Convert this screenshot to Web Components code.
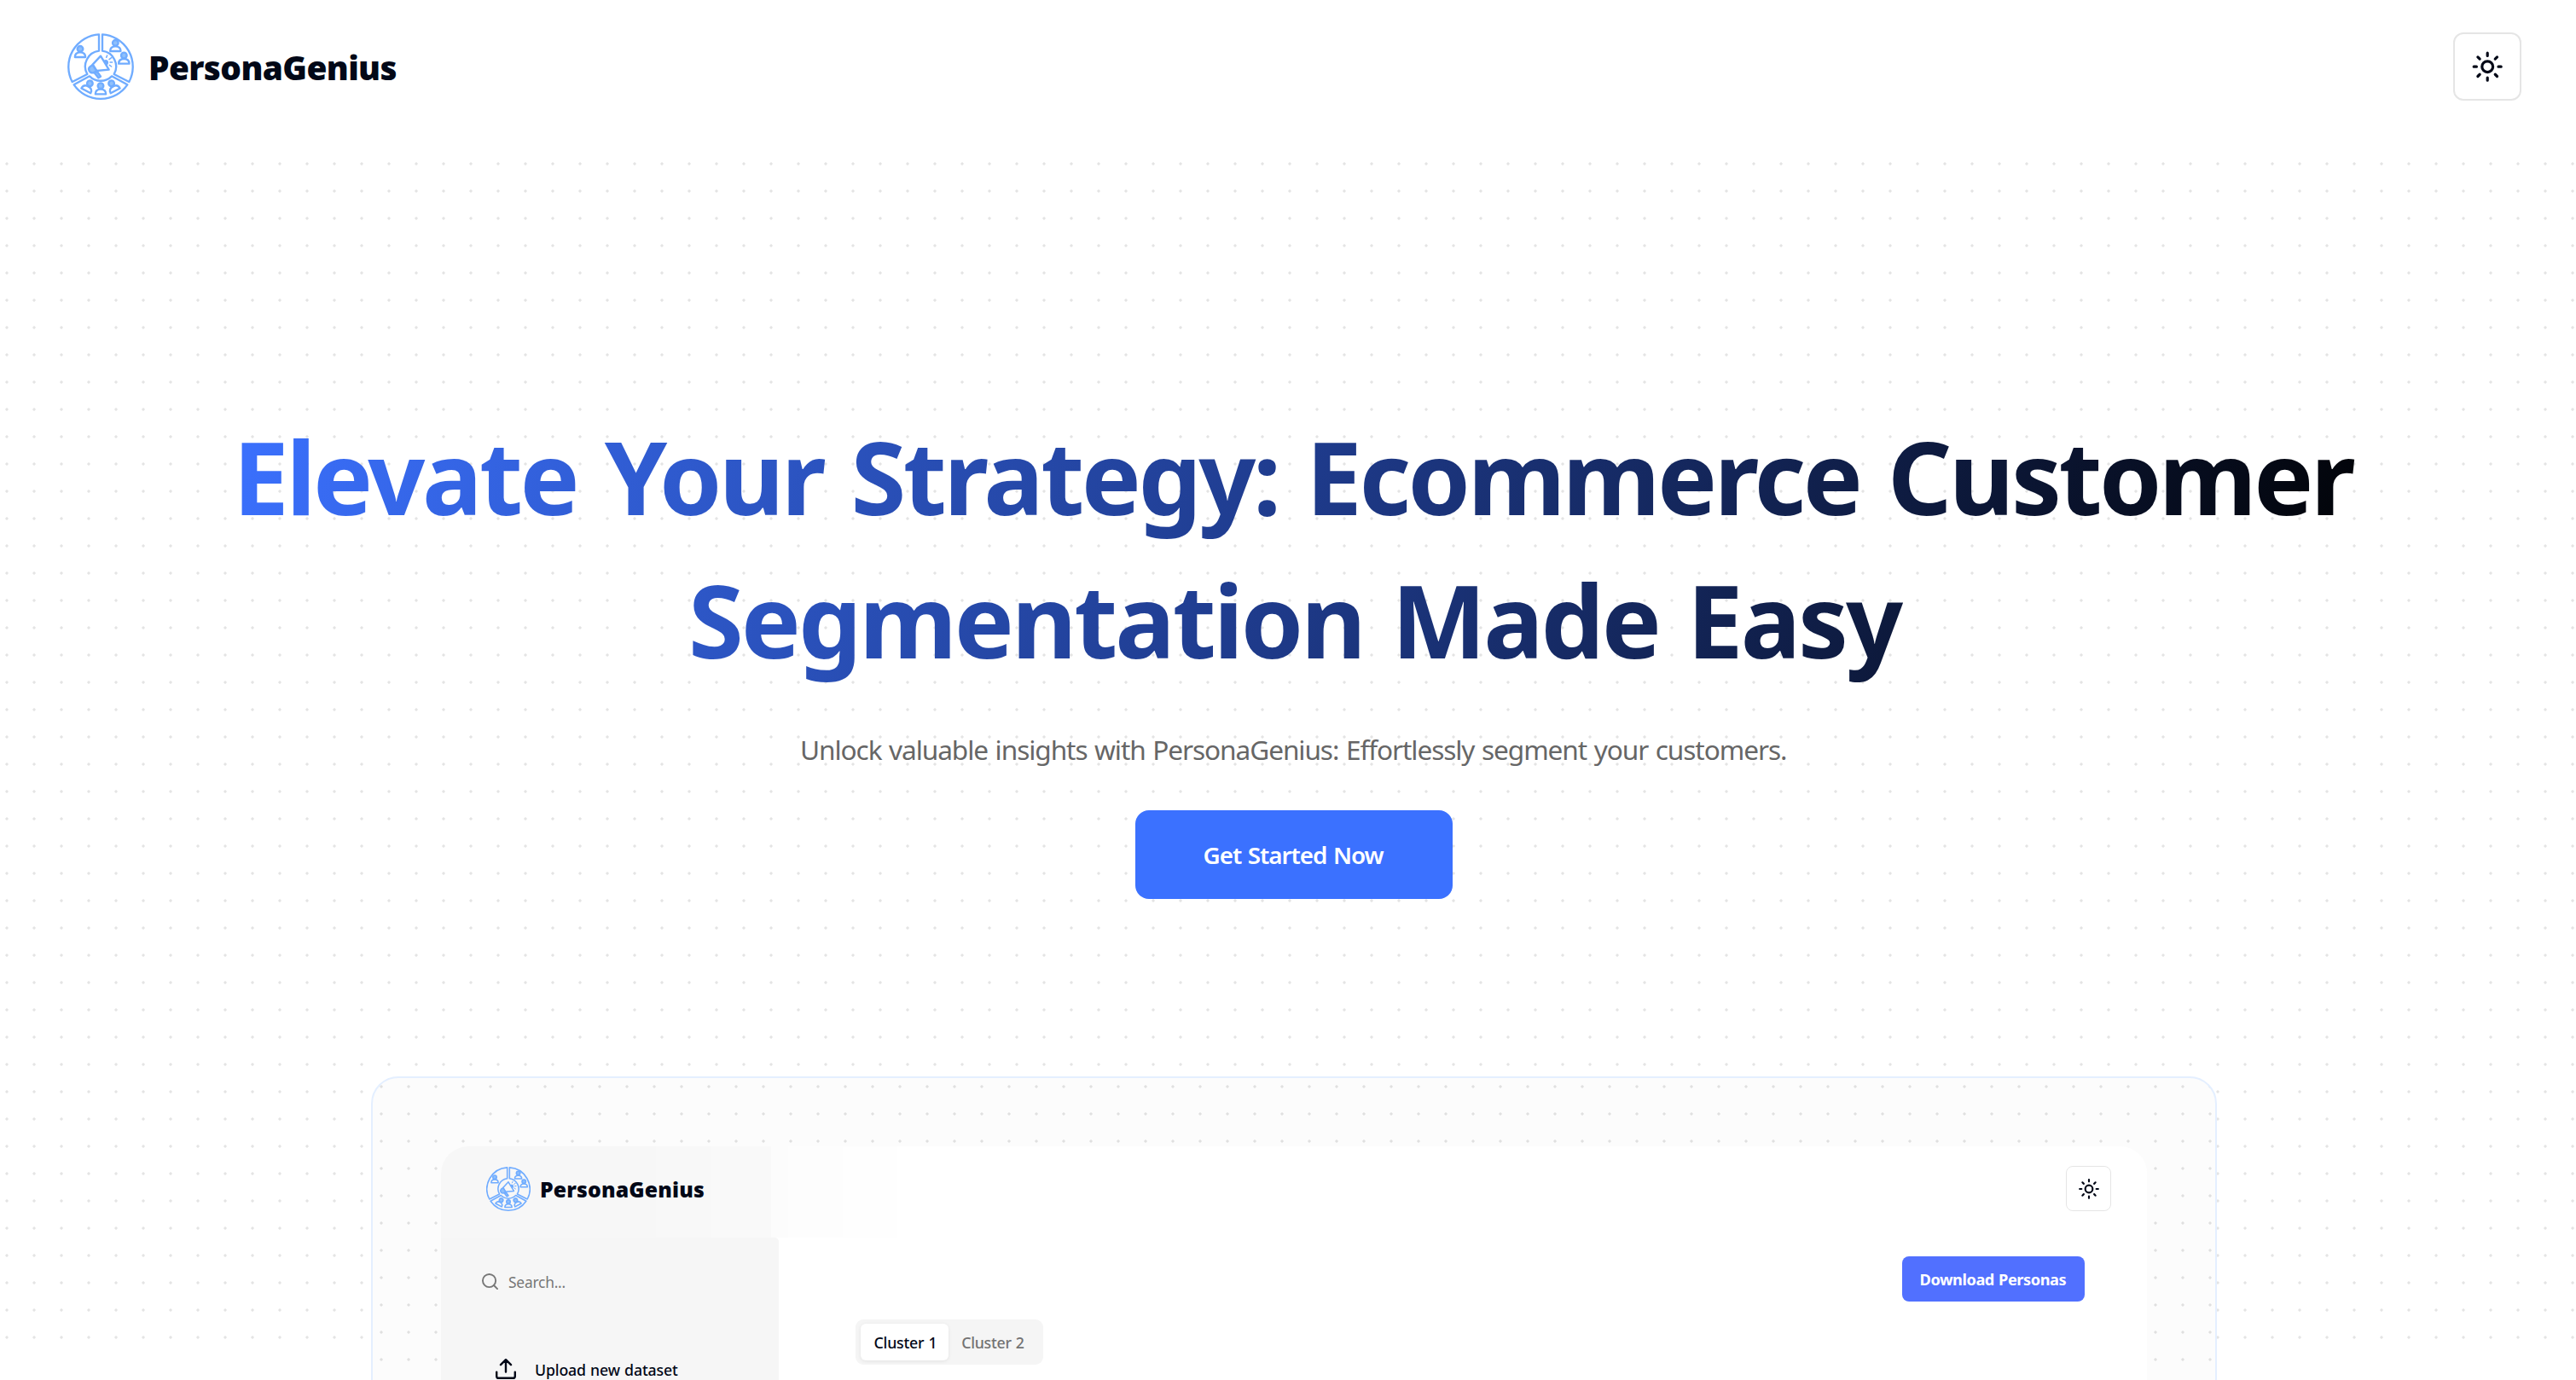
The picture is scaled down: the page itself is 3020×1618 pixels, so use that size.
<!DOCTYPE html>
<html lang="en">
<head>
<meta charset="utf-8">
<title>PersonaGenius</title>
<style>
html,body{margin:0;background:#fff}
body{width:3020px;height:1618px;overflow:hidden;font-family:"Noto Sans","Open Sans",sans-serif;color:#020817}
</style>
</head>
<body>
<landing-page></landing-page>
<script>
const define = (name, html, ready) => customElements.define(name, class extends HTMLElement {
  connectedCallback() {
    if (this.shadowRoot) return;
    const t = document.createElement('template');
    t.innerHTML = html;
    this.attachShadow({mode: 'open'}).append(t.content.cloneNode(true));
    if (ready) ready.call(this, this.shadowRoot);
  }
});

/* One line of text whose inked width is set in pixels by letter spacing. */
const ctx = document.createElement('canvas').getContext('2d');
define('fit-line', `<style>
  :host{display:block;white-space:nowrap;flex:none}
  span{display:inline-block}
</style><span><slot></slot></span>`, function (root) {
  const w = +this.getAttribute('width');
  const cs = getComputedStyle(this);
  const text = this.textContent;
  ctx.font = `${cs.fontWeight} ${cs.fontSize} ${cs.fontFamily}`;
  const m = ctx.measureText(text);
  const gap = parseFloat(cs.fontSize) * 0.045;
  const ink = m.actualBoundingBoxLeft + m.actualBoundingBoxRight + gap * (text.split(' ').length - 1);
  this.style.width = w + 'px';
  const s = root.querySelector('span');
  s.style.wordSpacing = gap + 'px';
  s.style.letterSpacing = (w - ink) / (text.length - 1) + 'px';
  s.style.marginLeft = m.actualBoundingBoxLeft + 'px';
});

define('segment-logo', `<style>
  :host{display:block;flex:none;width:var(--size,78px);height:var(--size,78px)}
  svg{display:block;width:100%;height:100%}
</style>
<svg viewBox="9 9 234 234" fill="none" stroke="#70acff" stroke-width="7" stroke-linejoin="round" stroke-linecap="round">
  <defs>
    <g id="p"><path d="M-18.500 16 C-18.500 4 -11 -1 0 -1 C11 -1 18.500 4 18.500 16 Z"/><circle cx="0" cy="-13" r="10" fill="#8fc0fb"/></g>
  </defs>
  <path d="M120 13 V71 A55 55 0 0 0 79 153 L26 180 A114 114 0 0 1 120 13Z"/>
  <path d="M132 13 V71 A55 55 0 0 1 173 153 L226 180 A114 114 0 0 0 132 13Z"/>
  <path d="M32 190 L87 160 A55 55 0 0 0 165 160 L220 190 A114 114 0 0 1 32 190Z"/>
  <use href="#p" x="54" y="77"/>
  <use href="#p" x="178" y="56"/>
  <use href="#p" x="208" y="100"/>
  <use href="#p" x="126" y="207"/>
  <use href="#p" transform="translate(82 197) rotate(28)"/>
  <use href="#p" transform="translate(170 197) rotate(-28)"/>
  <path d="M126 89 L155 137 L112 141 L98 119 Z"/>
  <path d="M98 120 L112 142 L100 148 C86 150 80 134 88 127Z" fill="#8fc0fb"/>
  <path d="M105 149 L114 144 L126 161 L118 166Z" fill="#8fc0fb"/>
  <path d="M141 106 C150 104 153 112 147 119Z" fill="#70acff"/>
  <path d="M146 94 L149 87 M156 101 L164 95 M159 111 L167 111 M157 121 L164 126" stroke-width="4.5"/>
</svg>`);

define('theme-button', `<style>
  :host{display:flex;flex:none;box-sizing:border-box;align-items:center;justify-content:center;width:var(--size,80px);height:var(--size,80px);
    border:var(--line,2px) solid #e5e5e5;border-radius:var(--radius,12px);background:#fff}
  svg{width:var(--icon,38.4px);height:var(--icon,38.4px)}
</style>
<svg viewBox="0 0 24 24" fill="none" stroke="#020817" stroke-width="2" stroke-linecap="round" stroke-linejoin="round">
  <circle cx="12" cy="12" r="4"/><path d="M12 2v2M12 20v2M4.93 4.93l1.41 1.41M17.66 17.66l1.41 1.41M2 12h2M20 12h2M6.34 17.66l-1.41 1.41M19.07 4.93l-1.41 1.41"/>
</svg>`);

define('site-header', `<style>
  :host{display:flex;justify-content:space-between;height:138px;margin-bottom:38px;padding:38px 64px 0 79px;box-sizing:border-box;align-items:flex-start}
  .brand{display:flex;align-items:center;gap:19px;height:80px}
  fit-line{font-size:38.8px;font-weight:900;line-height:78px;margin-top:1px}
</style>
<div class="brand"><segment-logo></segment-logo><fit-line width="288.5">PersonaGenius</fit-line></div>
<theme-button></theme-button>`);

define('cta-button', `<style>
  :host{display:flex;align-items:center;justify-content:center;width:372px;height:104px;border-radius:16px;background:#3b71ff;color:#fff}
  fit-line{font-size:27.8px;font-weight:600;line-height:104px}
</style><fit-line width="211">Get Started Now</fit-line>`);

define('hero-section', `<style>
  :host{display:flex;flex-direction:column;align-items:center;height:1408px;box-sizing:border-box;padding:298px 0 0 14px;
    background:radial-gradient(circle,#e4e4e4 1.2px,rgba(228,228,228,0) 2.1px) -8px 0/32px 32px}
  h1{margin:0;display:flex;flex-direction:column;align-items:center;flex:none;width:2484px;padding-left:10px;font-size:117.6px;font-weight:700;line-height:168px;
    color:transparent;background:linear-gradient(110deg,#3b71ff,#1e3a8a 50%,#000);-webkit-background-clip:text;background-clip:text}
  .sub{font-size:31.6px;line-height:56px;color:#666;margin:41px 0 43px}
  cta-button{flex:none}
  ::slotted(*){flex:none;margin-top:208px}
</style>
<h1><fit-line width="2478">Elevate Your Strategy: Ecommerce Customer</fit-line><fit-line width="1420">Segmentation Made Easy</fit-line></h1>
<fit-line class="sub" width="1154">Unlock valuable insights with PersonaGenius: Effortlessly segment your customers.</fit-line>
<cta-button></cta-button>
<slot></slot>`);

define('side-bar', `<style>
  :host{display:block;flex:none;width:396px;background:#f6f6f6;border-top-right-radius:5px}
  .search{display:flex;align-items:center;gap:12px;margin:36px 0 0 48px;height:30px;color:#777}
  .search svg{width:19px;height:19px}
  .search fit-line{font-size:17.4px;line-height:30px;margin-top:2px}
  .up{display:flex;align-items:center;gap:23px;margin:75px 0 0 64px;height:26px;font-weight:500}
  .up svg{width:24px;height:24px}
  .up fit-line{font-size:17.7px;line-height:24px;margin-top:1px}
</style>
<div class="search"><svg viewBox="2 2 20 20" fill="none" stroke="#777" stroke-width="2" stroke-linecap="round"><circle cx="11" cy="11" r="8"/><path d="m21 21-4.3-4.3"/></svg><fit-line width="66.5">Search...</fit-line></div>
<div class="up"><svg viewBox="2 2 20 20" fill="none" stroke="#020817" stroke-width="2" stroke-linecap="round" stroke-linejoin="round"><path d="M21 15v4a2 2 0 0 1-2 2H5a2 2 0 0 1-2-2v-4M17 8l-5-5-5 5M12 3v12"/></svg><fit-line width="167">Upload new dataset</fit-line></div>`);

define('cluster-tabs', `<style>
  :host{display:flex;box-sizing:border-box;width:220px;height:53px;padding:5px 6px;border-radius:9px;background:#f5f5f5;font-weight:500;font-size:17.8px}
  div{display:flex;justify-content:center;height:43px;width:103px;border-radius:6px;color:#737373}
  .on{background:#fff;color:#020817;box-shadow:0 1px 4px rgba(0,0,0,.08)}
  fit-line{line-height:45px}
  div:last-child fit-line{margin-left:2px}
</style>
<div class="on"><fit-line width="70">Cluster 1</fit-line></div><div><fit-line width="72.5">Cluster 2</fit-line></div>`);

define('app-preview', `<style>
  :host{display:block;box-sizing:border-box;width:2164px;height:1100px;padding:80px;border:2px solid #e4efff;border-radius:32px;
    background:radial-gradient(circle,#e0e0e0 1.2px,rgba(224,224,224,0) 2.1px) -6px -6px/32px 32px #fcfcfc}
  .screen{display:flex;flex-direction:column;height:936px;border-radius:32px;overflow:hidden;background:#fff}
  header{display:flex;align-items:flex-start;height:107px;box-sizing:border-box;padding:23px 42px 0 53px;
    background:linear-gradient(90deg,#f7f7f7 0 252px,#f8f8f8 252px 317px,#f9f9f9 317px 387px,#fcfcfc 387px 407px,#fdfdfd 407px 471px,#fefefe 471px 535px,#fff 535px)}
  segment-logo{--size:52px;margin-top:1px}
  header fit-line{font-size:24.8px;font-weight:900;line-height:52px;margin:1px auto 0 12px}
  theme-button{--size:53px;--radius:8px;--line:1px;--icon:26px}
  .body{display:flex;flex:1}
  main{flex:1;display:flex;flex-direction:column;padding:22px 73px 0 90px}
  .dl{align-self:flex-end;display:flex;justify-content:center;width:214px;height:53px;border-radius:8px;background:#5170ff;color:#fff}
  .dl fit-line{font-size:18.2px;line-height:54px;font-weight:700}
  cluster-tabs{margin-top:21px}
</style>
<div class="screen">
  <header><segment-logo></segment-logo><fit-line width="191">PersonaGenius</fit-line><theme-button></theme-button></header>
  <div class="body"><side-bar></side-bar>
    <main><div class="dl"><fit-line width="171">Download Personas</fit-line></div><cluster-tabs></cluster-tabs></main>
  </div>
</div>`);

define('landing-page', `<style>:host{display:block;height:1618px;overflow:hidden}</style>
<site-header></site-header>
<hero-section><app-preview></app-preview></hero-section>`);
</script>
</body>
</html>
